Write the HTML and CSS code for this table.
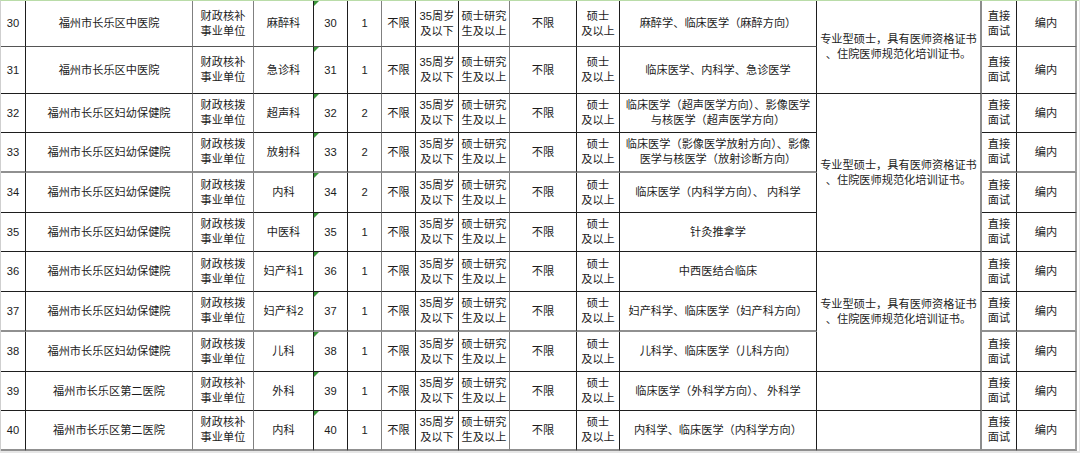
FILE: index.html
```html
<!DOCTYPE html>
<html lang="zh">
<head>
<meta charset="utf-8">
<title>招聘岗位表</title>
<link rel="stylesheet" href="styles.css">
</head>
<body>
<div class="sheet">
  <div class="row r-dg">
    <div class="c">30</div><div class="c">福州市长乐区中医院</div><div class="c">财政核补<br>事业单位</div><div class="c">麻醉科</div><div class="c code">30</div><div class="c">1</div><div class="c">不限</div><div class="c">35周岁<br>及以下</div><div class="c">硕士研究<br>生及以上</div><div class="c">不限</div><div class="c">硕士<br>及以上</div><div class="c">麻醉学、临床医学（麻醉方向）</div><div class="c req m span2">专业型硕士，具有医师资格证书<br>、住院医师规范化培训证书。</div><div class="c">直接<br>面试</div><div class="c">编内</div>
  </div>
  <div class="row">
    <div class="c">31</div><div class="c">福州市长乐区中医院</div><div class="c">财政核补<br>事业单位</div><div class="c">急诊科</div><div class="c code">31</div><div class="c">1</div><div class="c">不限</div><div class="c">35周岁<br>及以下</div><div class="c">硕士研究<br>生及以上</div><div class="c">不限</div><div class="c">硕士<br>及以上</div><div class="c">临床医学、内科学、急诊医学</div><div class="c">直接<br>面试</div><div class="c">编内</div>
  </div>
  <div class="row">
    <div class="c">32</div><div class="c">福州市长乐区妇幼保健院</div><div class="c">财政核拨<br>事业单位</div><div class="c">超声科</div><div class="c code">32</div><div class="c">2</div><div class="c">不限</div><div class="c">35周岁<br>及以下</div><div class="c">硕士研究<br>生及以上</div><div class="c">不限</div><div class="c">硕士<br>及以上</div><div class="c">临床医学（超声医学方向）、影像医学<br>与核医学（超声医学方向）</div><div class="c req m span4">专业型硕士，具有医师资格证书<br>、住院医师规范化培训证书。</div><div class="c">直接<br>面试</div><div class="c">编内</div>
  </div>
  <div class="row r-gt">
    <div class="c">33</div><div class="c">福州市长乐区妇幼保健院</div><div class="c">财政核拨<br>事业单位</div><div class="c">放射科</div><div class="c code">33</div><div class="c">2</div><div class="c">不限</div><div class="c">35周岁<br>及以下</div><div class="c">硕士研究<br>生及以上</div><div class="c">不限</div><div class="c">硕士<br>及以上</div><div class="c">临床医学（影像医学放射方向）、影像<br>医学与核医学（放射诊断方向）</div><div class="c">直接<br>面试</div><div class="c">编内</div>
  </div>
  <div class="row">
    <div class="c">34</div><div class="c">福州市长乐区妇幼保健院</div><div class="c">财政核拨<br>事业单位</div><div class="c">内科</div><div class="c code">34</div><div class="c">2</div><div class="c">不限</div><div class="c">35周岁<br>及以下</div><div class="c">硕士研究<br>生及以上</div><div class="c">不限</div><div class="c">硕士<br>及以上</div><div class="c">临床医学（内科学方向）、 内科学</div><div class="c">直接<br>面试</div><div class="c">编内</div>
  </div>
  <div class="row">
    <div class="c">35</div><div class="c">福州市长乐区妇幼保健院</div><div class="c">财政核拨<br>事业单位</div><div class="c">中医科</div><div class="c code">35</div><div class="c">1</div><div class="c">不限</div><div class="c">35周岁<br>及以下</div><div class="c">硕士研究<br>生及以上</div><div class="c">不限</div><div class="c">硕士<br>及以上</div><div class="c">针灸推拿学</div><div class="c">直接<br>面试</div><div class="c">编内</div>
  </div>
  <div class="row">
    <div class="c">36</div><div class="c">福州市长乐区妇幼保健院</div><div class="c">财政核拨<br>事业单位</div><div class="c">妇产科1</div><div class="c code">36</div><div class="c">1</div><div class="c">不限</div><div class="c">35周岁<br>及以下</div><div class="c">硕士研究<br>生及以上</div><div class="c">不限</div><div class="c">硕士<br>及以上</div><div class="c">中西医结合临床</div><div class="c req m span3">专业型硕士，具有医师资格证书<br>、住院医师规范化培训证书。</div><div class="c">直接<br>面试</div><div class="c">编内</div>
  </div>
  <div class="row r-gt">
    <div class="c">37</div><div class="c">福州市长乐区妇幼保健院</div><div class="c">财政核拨<br>事业单位</div><div class="c">妇产科2</div><div class="c code">37</div><div class="c">1</div><div class="c">不限</div><div class="c">35周岁<br>及以下</div><div class="c">硕士研究<br>生及以上</div><div class="c">不限</div><div class="c">硕士<br>及以上</div><div class="c">妇产科学、临床医学（妇产科方向）</div><div class="c">直接<br>面试</div><div class="c">编内</div>
  </div>
  <div class="row">
    <div class="c">38</div><div class="c">福州市长乐区妇幼保健院</div><div class="c">财政核拨<br>事业单位</div><div class="c">儿科</div><div class="c code">38</div><div class="c">1</div><div class="c">不限</div><div class="c">35周岁<br>及以下</div><div class="c">硕士研究<br>生及以上</div><div class="c">不限</div><div class="c">硕士<br>及以上</div><div class="c">儿科学、临床医学（儿科方向）</div><div class="c">直接<br>面试</div><div class="c">编内</div>
  </div>
  <div class="row">
    <div class="c">39</div><div class="c">福州市长乐区第二医院</div><div class="c">财政核补<br>事业单位</div><div class="c">外科</div><div class="c code">39</div><div class="c">1</div><div class="c">不限</div><div class="c">35周岁<br>及以下</div><div class="c">硕士研究<br>生及以上</div><div class="c">不限</div><div class="c">硕士<br>及以上</div><div class="c">临床医学（外科学方向）、 外科学</div><div class="c req"></div><div class="c">直接<br>面试</div><div class="c">编内</div>
  </div>
  <div class="row r-gt">
    <div class="c">40</div><div class="c">福州市长乐区第二医院</div><div class="c">财政核补<br>事业单位</div><div class="c">内科</div><div class="c code">40</div><div class="c">1</div><div class="c">不限</div><div class="c">35周岁<br>及以下</div><div class="c">硕士研究<br>生及以上</div><div class="c">不限</div><div class="c">硕士<br>及以上</div><div class="c">内科学、临床医学（内科学方向）</div><div class="c req"></div><div class="c">直接<br>面试</div><div class="c">编内</div>
  </div>
</div>
</body>
</html>
```
FILE: styles.css
```css
html, body {
  margin: 0;
  padding: 0;
  background: #e6e6e6;
}
body {
  width: 1080px;
  height: 453px;
  overflow: hidden;
}
.sheet {
  display: grid;
  grid-template-columns: 25px 167px 61px 60px 34px 34px 34px 43px 51px 67px 43px 197px 165px 35px 60px;
  grid-template-rows: 46px 47px 39px 40px 40px 39px 40px 40px 40px 39px 40px;
  width: 1078px;
  border-top: 1px solid #b9dca8;
  border-left: 1px solid #cfcfcf;
  background: #fff;
  font-family: "Liberation Sans", "Noto Sans CJK SC", sans-serif;
  font-size: 11.2px;
  line-height: 15px;
  color: #1c1c1c;
}
.row {
  display: contents;
}
.c {
  box-sizing: border-box;
  display: flex;
  align-items: center;
  justify-content: center;
  text-align: center;
  white-space: nowrap;
  border-right: 1px solid #1e1e1e;
  border-bottom: 1px solid #1e1e1e;
  position: relative;
  background: #fff;
}
.row > .c:nth-child(2),
.row > .c:nth-child(3),
.row > .c:nth-child(6),
.row > .c:nth-child(9) {
  border-right-color: #808080;
}
.row > .c:last-child {
  border-right: 2px solid #a0a0a0;
}
.row > .c.req {
  border-right: 2px solid #8c8c8c;
}
.r-dg > .c {
  border-bottom-color: #555;
}
.r-gt > .c {
  border-bottom: 2px solid #909090;
}
.row > .c.m {
  border-bottom: 1px solid #1e1e1e;
}
.span2 { grid-row: span 2; }
.span3 { grid-row: span 3; }
.span4 { grid-row: span 4; }
.code::before {
  content: "";
  position: absolute;
  left: 0;
  top: 0;
  border-top: 5px solid #3a963a;
  border-right: 5px solid transparent;
}
```
